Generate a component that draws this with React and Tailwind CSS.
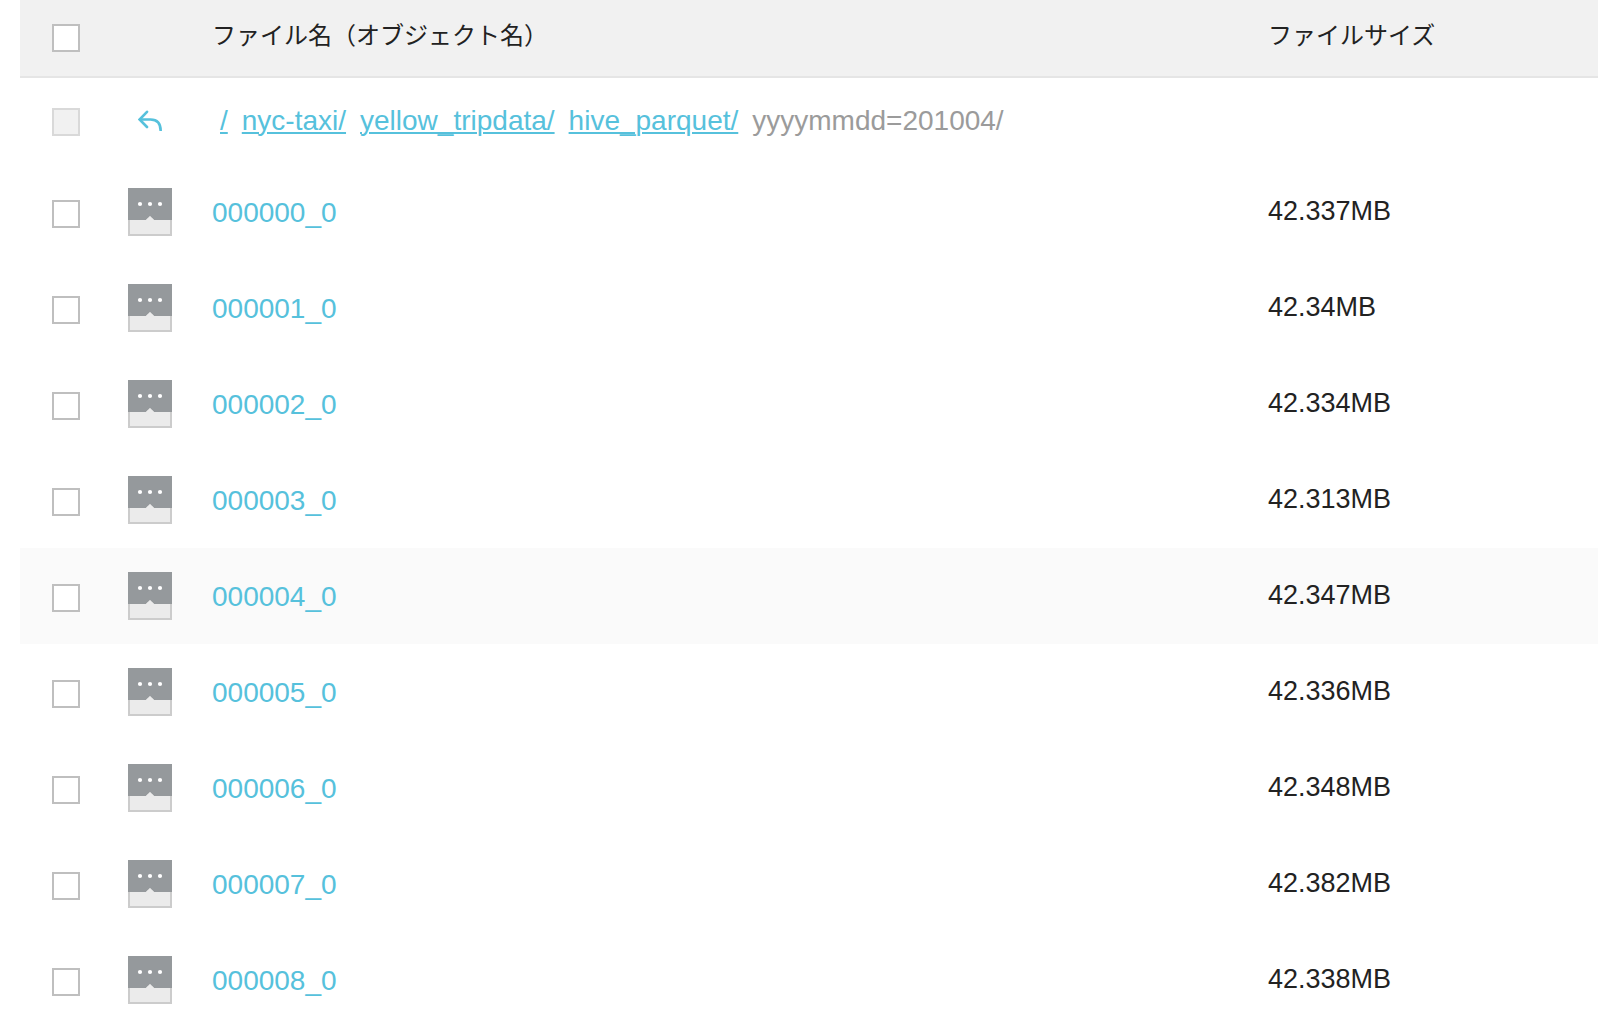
const files = [
  { name: "000000_0", size: "42.337MB" },
  { name: "000001_0", size: "42.34MB" },
  { name: "000002_0", size: "42.334MB" },
  { name: "000003_0", size: "42.313MB" },
  { name: "000004_0", size: "42.347MB", active: true },
  { name: "000005_0", size: "42.336MB" },
  { name: "000006_0", size: "42.348MB" },
  { name: "000007_0", size: "42.382MB" },
  { name: "000008_0", size: "42.338MB" },
];

const parents = ["/", "nyc-taxi/", "yellow_tripdata/", "hive_parquet/"];

function Checkbox({ label, disabled }) {
  return (
    <input
      type="checkbox"
      aria-label={label}
      disabled={disabled}
      className="block size-7 appearance-none border-2 border-[#bfbfbf] bg-white checked:bg-[#56c1dc] disabled:border-[#d9d9d9] disabled:bg-[#f1f1f1]"
    />
  );
}

function FileIcon() {
  return (
    <svg width="44" height="48" viewBox="0 0 44 48" className="block" aria-hidden="true">
      <rect width="44" height="48" fill="#cccccc" />
      <rect x="2" y="30" width="40" height="16" fill="#ebebeb" />
      <path d="M0 0h44v32H26l-4-4-4 4H0z" fill="#95999c" />
      <path d="M18 32l4-4 4 4z" fill="#ebebeb" />
      <circle cx="12" cy="16" r="2.1" fill="#fff" />
      <circle cx="22" cy="16" r="2.1" fill="#fff" />
      <circle cx="32" cy="16" r="2.1" fill="#fff" />
    </svg>
  );
}

function BackIcon() {
  return (
    <svg
      width="24"
      height="22"
      viewBox="0 0 24 22"
      fill="none"
      stroke="currentColor"
      strokeWidth="2.6"
      className="block"
      aria-hidden="true"
    >
      <path d="M9 1.8L1.6 9.5L9 17" strokeLinecap="round" />
      <path d="M1.8 9.5H12.5C19 9.5 22.7 13.5 22.7 21" />
    </svg>
  );
}

export default function App() {
  return (
    <main className="h-screen overflow-hidden bg-white pl-5 font-['Liberation_Sans','Noto_Sans_CJK_JP',sans-serif] text-[28px] leading-8 text-[#222222]">
      <table className="w-full table-fixed border-separate border-spacing-0 text-left">
        <colgroup>
          <col className="w-[108px]" />
          <col className="w-[84px]" />
          <col />
          <col className="w-[330px]" />
        </colgroup>
        <thead>
          <tr className="h-[78px] bg-[#f1f1f1] text-2xl">
            <th className="border-b-2 border-[#e5e5e5] pl-8">
              <Checkbox label="すべて選択" />
            </th>
            <td className="border-b-2 border-[#e5e5e5]" />
            <th className="border-b-2 border-[#e5e5e5] pb-1 font-normal">ファイル名（オブジェクト名）</th>
            <th className="border-b-2 border-[#e5e5e5] pb-1 font-normal">ファイルサイズ</th>
          </tr>
        </thead>
        <tbody>
          <tr className="h-[86px]">
            <td className="pt-0.5 pl-8">
              <Checkbox label="上の階層" disabled />
            </td>
            <td className="pb-1 pl-2.5 text-[#56c1dc]">
              <a href="#up" aria-label="上の階層へ" className="inline-block align-middle">
                <BackIcon />
              </a>
            </td>
            <td colSpan={2} className="pl-2">
              <nav className="flex gap-3.5 whitespace-nowrap">
                {parents.map((p) => (
                  <a key={p} href="#folder" className="text-[#56c1dc] underline decoration-2 underline-offset-2">
                    {p}
                  </a>
                ))}
                <span className="text-[#9b9b9b]">yyyymmdd=201004/</span>
              </nav>
            </td>
          </tr>
          {files.map((f) => (
            <tr key={f.name} className={f.active ? "h-24 bg-[#fafafa]" : "h-24"}>
              <td className="pt-1 pl-8">
                <Checkbox label={f.name} />
              </td>
              <td>
                <FileIcon />
              </td>
              <td className="pt-0.5">
                <a href="#file" className="text-[#56c1dc]">
                  {f.name}
                </a>
              </td>
              <td className="pb-0.5 text-[27px]">{f.size}</td>
            </tr>
          ))}
        </tbody>
      </table>
    </main>
  );
}
